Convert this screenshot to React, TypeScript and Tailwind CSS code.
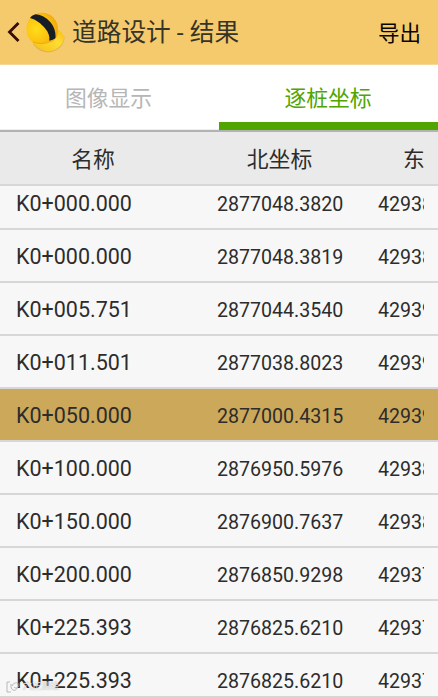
const rows = [
  ['K0+000.000', '2877048.3820', '429388'],
  ['K0+000.000', '2877048.3819', '429388'],
  ['K0+005.751', '2877044.3540', '429391'],
  ['K0+011.501', '2877038.8023', '429391'],
  ['K0+050.000', '2877000.4315', '429391'],
  ['K0+100.000', '2876950.5976', '429388'],
  ['K0+150.000', '2876900.7637', '429388'],
  ['K0+200.000', '2876850.9298', '429377'],
  ['K0+225.393', '2876825.6210', '429377'],
  ['K0+225.393', '2876825.6210', '429377'],
];

function Helmet() {
  return (
    <svg viewBox="0 0 40 42" className="h-[42px] w-[40px] shrink-0">
      <defs>
        <radialGradient id="dome" cx="32%" cy="55%" r="75%">
          <stop offset="0" stopColor="#ffdc1a" />
          <stop offset="0.6" stopColor="#fcc00e" />
          <stop offset="1" stopColor="#eda20b" />
        </radialGradient>
        <linearGradient id="brim" x1="0" y1="1" x2="1" y2="0">
          <stop offset="0" stopColor="#f5bd14" />
          <stop offset="0.6" stopColor="#ffdd32" />
          <stop offset="1" stopColor="#f6b915" />
        </linearGradient>
      </defs>
      <path d="M8 33C13 40 20 43 28 40.500C35 38 39.500 33 39.500 26L34 20Z" fill="#b8862c" opacity="0.35" />
      <path d="M7 31C12 37 18 41 26 40C33 38.500 39 33 39 26C38.500 23 35.500 20 32 18Z" fill="url(#brim)" />
      <path d="M1.500 18C1.500 8 8 1.700 17 1.700C26 1.700 33 9 33 18C33 22 32.500 25 31 27C28 30 22 32 16 32C12 32 9 31.500 7 30.500C3.500 28 1.500 23 1.500 18Z" fill="url(#dome)" />
      <path d="M5 7C6.500 5 8.500 3.800 11 3.300C16 3.800 21 6.500 25 10.700C29 15 31 21 30.500 27C29 28.300 26.500 29.200 24.300 29.700C25 25.500 23.500 21.500 20 17.300C16 12.500 11 8.500 5 7Z" fill="#171d26" />
      <path d="M8 31C14 33.500 23 33 30 28.500" fill="none" stroke="#e59b09" strokeWidth="0.7" />
    </svg>
  );
}

export default function App() {
  return (
    <div className="relative flex h-[697px] w-[438px] flex-col overflow-hidden bg-[#f7f7f7] font-['Roboto','Noto_Sans_CJK_SC',sans-serif] text-[#2c2c2c]">
      <header className="flex h-[65px] shrink-0 items-center border-b border-[#f4d899] bg-[#f5ca6d] pr-[17px] pl-[7px]">
        <svg viewBox="0 0 13 20" className="mr-[5px] h-[20px] w-[13px] shrink-0">
          <path d="M11.500 1L2.500 10L11.500 19" fill="none" stroke="#360c05" strokeWidth="2.8" />
        </svg>
        <Helmet />
        <h1 className="ml-[7px] flex-1 pt-[2px] text-[24.700px] leading-[36px] whitespace-nowrap text-[#353426]">道路设计 - 结果</h1>
        <button className="pt-[3px] text-[21.500px] leading-[30px] text-[#090704]">导出</button>
      </header>

      <nav className="flex h-[67px] shrink-0 border-b-2 border-[#b3b3b3] bg-white text-[21.800px] leading-[68px]">
        <div className="w-[219px] border-b border-[#eeeeee] pr-[2px] text-center text-[#b6b6b6]">图像显示</div>
        <div className="w-[219px] border-b-8 border-[#51a500] pr-[1px] text-center text-[#51a500]">逐桩坐标</div>
      </nav>

      <div className="flex h-[54px] shrink-0 items-center border-b-2 border-[#d7d7d7] bg-[#eaeaea] pt-[4px] text-[21.800px]">
        <span className="w-[186px] text-center">名称</span>
        <span className="w-[187px] text-center">北坐标</span>
        <span className="ml-[30px]">东</span>
      </div>

      <main className="h-[510px] shrink-0 overflow-hidden">
        <div className="-mt-[9px]">
          {rows.map(([name, north, east], i) => (
            <div
              key={i}
              className={`flex h-[53px] items-center border-b-2 border-[#d7d7d7] pl-[16px] ${i === 4 ? 'bg-[#cba85a]' : 'bg-[#f7f7f7]'}`}
            >
              <span className="w-[201px] pt-[4px] text-[21.500px]">{name}</span>
              <span className="w-[161px] pt-[4px] text-[19.600px]">{north}</span>
              <span className="w-[46px] overflow-hidden pt-[4px] text-[19.600px]">{east}</span>
            </div>
          ))}
        </div>
      </main>
      <div className="h-px shrink-0 bg-[#d7d7d7]" />

      <div className="absolute top-[680px] left-[6px] flex items-center gap-[3px] text-[9px] leading-[13px] text-[#f9f9f9] opacity-80 [text-shadow:0_0_1px_#777]">
        <svg viewBox="0 0 14 12" className="h-[12px] w-[14px]">
          <path d="M4 1H1V11H5M5 3C4 10 10 11 11 7M6 5C7 1 13 1 13 4C13 7 9 8 8 6" fill="none" stroke="#aaa" strokeWidth="1" />
        </svg>
        <span>六正测绘</span>
      </div>
    </div>
  );
}
